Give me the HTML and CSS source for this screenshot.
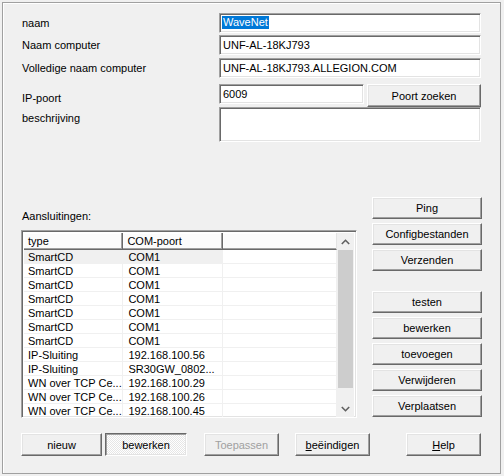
FILE: index.html
```html
<!DOCTYPE html>
<html>
<head>
<meta charset="utf-8">
<link rel="stylesheet" href="styles.css">
</head>
<body>
<div class="frame">
  <div class="form">
    <div class="row r1">
      <div class="lbl">naam</div>
      <div class="field"><span class="sel">WaveNet</span></div>
    </div>
    <div class="row r2">
      <div class="lbl">Naam computer</div>
      <div class="field">UNF-AL-18KJ793</div>
    </div>
    <div class="row r3">
      <div class="lbl">Volledige naam computer</div>
      <div class="field">UNF-AL-18KJ793.ALLEGION.COM</div>
    </div>
    <div class="row r4">
      <div class="lbl lbl-ip">IP-poort</div>
      <div class="portline">
        <div class="field port">6009</div>
        <div class="btn btn-port">Poort zoeken</div>
      </div>
    </div>
    <div class="row r5">
      <div class="lbl lbl-desc">beschrijving</div>
      <div class="field area"></div>
    </div>
  </div>

  <div class="middle">
    <div class="leftcol">
      <div class="lbl-list">Aansluitingen:</div>
      <div class="list">
        <div class="table">
          <div class="thead">
            <div class="th c1">type</div>
            <div class="th c2">COM-poort</div>
            <div class="th c3"></div>
          </div>
          <div class="tr hot"><div class="td c1">SmartCD</div><div class="td c2">COM1</div><div class="td c3"></div></div>
          <div class="tr"><div class="td c1">SmartCD</div><div class="td c2">COM1</div><div class="td c3"></div></div>
          <div class="tr"><div class="td c1">SmartCD</div><div class="td c2">COM1</div><div class="td c3"></div></div>
          <div class="tr"><div class="td c1">SmartCD</div><div class="td c2">COM1</div><div class="td c3"></div></div>
          <div class="tr"><div class="td c1">SmartCD</div><div class="td c2">COM1</div><div class="td c3"></div></div>
          <div class="tr"><div class="td c1">SmartCD</div><div class="td c2">COM1</div><div class="td c3"></div></div>
          <div class="tr"><div class="td c1">SmartCD</div><div class="td c2">COM1</div><div class="td c3"></div></div>
          <div class="tr"><div class="td c1">IP-Sluiting</div><div class="td c2">192.168.100.56</div><div class="td c3"></div></div>
          <div class="tr"><div class="td c1">IP-Sluiting</div><div class="td c2">SR30GW_0802...</div><div class="td c3"></div></div>
          <div class="tr"><div class="td c1">WN over TCP Ce...</div><div class="td c2">192.168.100.29</div><div class="td c3"></div></div>
          <div class="tr"><div class="td c1">WN over TCP Ce...</div><div class="td c2">192.168.100.26</div><div class="td c3"></div></div>
          <div class="tr"><div class="td c1">WN over TCP Ce...</div><div class="td c2">192.168.100.45</div><div class="td c3"></div></div>
        </div>
        <div class="scroll">
          <div class="arrow"><svg width="9" height="6" viewBox="0 0 9 6"><polyline points="0.8,5 4.5,1.3 8.2,5" fill="none" stroke="#606060" stroke-width="1.6"/></svg></div>
          <div class="track"><div class="thumb"></div></div>
          <div class="arrow"><svg width="9" height="6" viewBox="0 0 9 6"><polyline points="0.8,1 4.5,4.7 8.2,1" fill="none" stroke="#606060" stroke-width="1.6"/></svg></div>
        </div>
      </div>
    </div>
    <div class="rightcol">
      <div class="btn">Ping</div>
      <div class="btn">Configbestanden</div>
      <div class="btn">Verzenden</div>
      <div class="btn gap">testen</div>
      <div class="btn">bewerken</div>
      <div class="btn">toevoegen</div>
      <div class="btn">Verwijderen</div>
      <div class="btn">Verplaatsen</div>
    </div>
  </div>

  <div class="bottom">
    <div class="btn b-new">nieuw</div>
    <div class="btn b-edit pressed">bewerken</div>
    <div class="btn b-apply disabled">Toepassen</div>
    <div class="btn b-end"><u>b</u>eëindigen</div>
    <div class="btn b-help"><u>H</u>elp</div>
  </div>
</div>
</body>
</html>
```

FILE: styles.css
```css
* { box-sizing: border-box; }
html, body { margin: 0; padding: 0; }
body {
  background: #f0f0f0;
  font-family: "Liberation Sans", Arial, sans-serif;
  font-size: 11px;
  color: #000;
  width: 504px;
  height: 476px;
  overflow: hidden;
}
.frame {
  margin: 2px 0 0 2px;
  width: 499px;
  height: 472px;
  border: 1px solid #a0a0a0;
  box-shadow: inset 1px 1px #fff;
}
.form {
  padding: 10px 0 0 19px;
}
.row {
  display: grid;
  grid-template-columns: 197px 262px;
}
.r1 { height: 20px; }
.r2 { height: 20px; margin-top: 2px; }
.r3 { height: 20px; margin-top: 3px; }
.r4 { height: 23px; margin-top: 6px; }
.r5 { height: 35px; }
.lbl {
  line-height: 20px;
  white-space: nowrap;
}
.lbl-ip { padding-top: 4px; }
.lbl-desc { padding-top: 1px; }
.field {
  height: 20px;
  background: #fff;
  border: 1px solid;
  border-color: #a0a0a0 #fff #fff #a0a0a0;
  box-shadow: inset 1px 1px #696969, inset -1px -1px #e3e3e3;
  padding: 0 0 0 3px;
  line-height: 18px;
  white-space: nowrap;
  overflow: hidden;
}
.sel {
  display: inline-block;
  background: #0078d7;
  color: #fff;
  line-height: 13px;
  padding: 0 1px;
  margin-left: -1px;
  vertical-align: 1px;
}
.area { height: 35px; }
.portline {
  display: flex;
  gap: 3px;
}
.port { width: 145px; }
.btn {
  height: 22px;
  background: #f0f0f0;
  border: 1px solid;
  border-color: #fff #696969 #696969 #fff;
  box-shadow: inset -1px -1px #a0a0a0, inset 1px 1px #e3e3e3;
  display: flex;
  align-items: center;
  justify-content: center;
  white-space: nowrap;
}
.btn-port { width: 114px; height: 23px; }
.middle {
  margin: 55px 0 0 18px;
  height: 221px;
  display: flex;
  gap: 15px;
}
.leftcol {
  width: 336px;
  display: flex;
  flex-direction: column;
  justify-content: flex-end;
}
.lbl-list {
  line-height: 13px;
  padding-left: 1px;
  margin-bottom: 7px;
}
.list {
  height: 188px;
  border: 1px solid;
  border-color: #a0a0a0 #fff #fff #a0a0a0;
  box-shadow: inset 1px 1px #696969, inset -1px -1px #e3e3e3;
  padding: 2px;
  display: flex;
  background: #fff;
}
.table {
  width: 315px;
  height: 184px;
  overflow: hidden;
}
.thead {
  display: flex;
  height: 17px;
}
.th {
  height: 17px;
  background: #fbfbfb;
  border-right: 1px solid #696969;
  border-bottom: 1px solid #696969;
  box-shadow: inset -1px -1px #a0a0a0, inset 1px 1px #fff;
  padding: 0 0 0 4px;
  line-height: 16px;
}
.c1 { width: 100px; }
.c2 { width: 100px; }
.c3 { width: 115px; }
.th.c3 { border-right-color: #e3e3e3; box-shadow: inset 0 -1px #a0a0a0, inset 1px 1px #fff; }
.tr {
  display: flex;
  height: 14px;
}
.td {
  height: 14px;
  border-right: 1px solid #f0f0f0;
  border-bottom: 1px solid #f0f0f0;
  padding: 2px 0 0 4px;
  line-height: 11px;
  white-space: nowrap;
  overflow: hidden;
}
.td.c2 { padding-left: 5px; }
.hot .c1, .hot .c2 { background: #f0f0f0; }
.scroll {
  width: 17px;
  height: 184px;
  display: flex;
  flex-direction: column;
  background: #f0f0f0;
}
.arrow {
  height: 17px;
  display: flex;
  align-items: center;
  justify-content: center;
}
.track {
  flex: 1;
  padding: 0 1px;
}
.thumb {
  height: 138px;
  background: #cdcdcd;
}
.rightcol {
  width: 110px;
  display: flex;
  flex-direction: column;
  gap: 4px;
}
.rightcol .gap { margin-top: 16px; }
.bottom {
  margin: 15px 0 0 18px;
  display: flex;
}
.bottom .btn { height: 23px; }
.b-new { width: 81px; }
.b-edit { width: 82px; margin-left: 3px; }
.b-apply { width: 75px; margin-left: 17px; }
.b-end { width: 75px; margin-left: 16px; }
.b-help { width: 75px; margin-left: 36px; }
.pressed {
  border-color: #696969 #fff #fff #696969;
  box-shadow: inset 1px 1px #a0a0a0, inset -1px -1px #e3e3e3;
  background: repeating-conic-gradient(#ffffff 0 25%, #e6e6e6 0 50%) 0 0 / 2px 2px;
}
.disabled { color: #a0a0a0; }
u { text-underline-offset: 1px; }
```
